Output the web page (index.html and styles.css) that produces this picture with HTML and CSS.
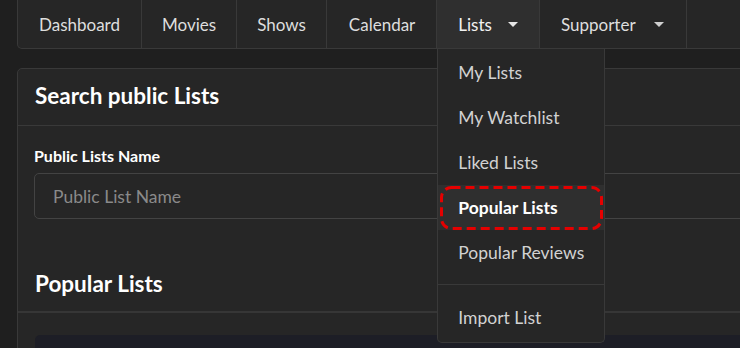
FILE: index.html
```html
<!DOCTYPE html>
<html lang="en">
  <head>
    <meta charset="UTF-8" />
    <meta name="viewport" content="width=device-width, initial-scale=1.0" />
    <title>Public Lists</title>
    <link rel="stylesheet" href="styles.css">
  </head>
  <body>
    <div class="page">
      <!-- Top navigation -->
      <nav class="navbar">
        <a class="nav-item">Dashboard</a>
        <a class="nav-item tight">Movies</a>
        <a class="nav-item tight">Shows</a>
        <a class="nav-item wide-left">Calendar</a>
        <div class="nav-item active has-menu">
          <span>Lists</span><span class="caret"></span>
          <div class="dropdown">
            <a class="dropdown-item">My Lists</a>
            <a class="dropdown-item">My Watchlist</a>
            <a class="dropdown-item">Liked Lists</a>
            <a class="dropdown-item selected">
              Popular Lists
              <svg class="highlight" width="166" height="47" viewBox="0 0 166 47">
                <rect x="1.5" y="1.5" width="160" height="41" rx="10" ry="10"
                  fill="none" stroke="#e50000" stroke-width="3" stroke-dasharray="9 5" />
              </svg>
            </a>
            <a class="dropdown-item">Popular Reviews</a>
            <div class="dropdown-divider"></div>
            <a class="dropdown-item">Import List</a>
          </div>
        </div>
        <div class="nav-item has-menu wide-right"><span>Supporter</span><span class="caret"></span></div>
        <div class="nav-fill"></div>
      </nav>

      <!-- Search panel -->
      <div class="panel">
        <div class="panel-header">Search public Lists</div>
        <div class="panel-body">
          <label class="field-label" for="listName">Public Lists Name</label>
          <input id="listName" class="field-input" type="text" placeholder="Public List Name" />
        </div>
        <div class="panel-header section">Popular Lists</div>
        <div class="panel-body lists">
          <div class="list-card"></div>
        </div>
      </div>
    </div>
  </body>
</html>
```

FILE: styles.css
```css
body {
  margin: 0;
  background: #1f1f1f;
  font-family: Lato, "Open Sans", sans-serif;
  color: #dcdcdc;
  overflow: hidden;
}
.page {
  width: 780px;
  padding-left: 17px;
}
.navbar {
  display: flex;
  height: 48px;
  background: #262626;
  border: 1px solid #393939;
  border-top: none;
  border-radius: 0 0 0 5px;
}
.nav-item {
  display: flex;
  align-items: center;
  padding: 0 21px;
  font-size: 17px;
  color: #dedede;
  border-right: 1px solid #393939;
  white-space: nowrap;
}
.nav-item.tight {
  padding: 0 20px;
}
.nav-item.wide-left {
  padding: 0 21px 0 22px;
}
.nav-item.wide-right {
  padding: 0 22px 0 21px;
}
.nav-item.active {
  background: #2f2f2f;
  color: #f2f2f2;
}
.has-menu {
  position: relative;
}
.caret {
  display: inline-block;
  margin-left: 16px;
  width: 0;
  height: 0;
  border-left: 5px solid transparent;
  border-right: 5px solid transparent;
  border-top: 5px solid #e6e6e6;
}
.has-menu:not(.active) .caret {
  border-top-color: #cfcfcf;
  margin-left: 18px;
}
.nav-fill {
  flex: 1;
}
.dropdown {
  position: absolute;
  top: 49px;
  left: 0;
  width: 166px;
  padding: 1px 0 2px;
  background: #262626;
  border: 1px solid #393939;
  border-top: none;
  border-radius: 0 0 5px 5px;
  z-index: 10;
}
.dropdown-item {
  position: relative;
  display: flex;
  align-items: center;
  height: 45px;
  padding-left: 20px;
  font-size: 17.5px;
  color: #d2d2d2;
}
.dropdown-item.selected {
  background: #2f2f2f;
  color: #ffffff;
  font-weight: bold;
}
.highlight {
  position: absolute;
  left: 2px;
  top: 1px;
}
.dropdown-divider {
  height: 1px;
  margin: 9px 0 10px;
  background: #393939;
}
.panel {
  margin-top: 19px;
  background: #262626;
  border: 1px solid #393939;
  border-radius: 5px 0 0 0;
}
.panel-header {
  height: 53px;
  display: flex;
  align-items: center;
  padding: 0 0 3px 17px;
  font-size: 22.5px;
  font-weight: bold;
  color: #ffffff;
  border-bottom: 1px solid #393939;
}
.panel-header.section {
  padding: 2px 0 1px 17px;
  border-bottom: 2px solid #363636;
}
.panel-body {
  padding: 20px 0 36px 16px;
}
.field-label {
  display: block;
  font-size: 16px;
  font-weight: bold;
  color: #ffffff;
  margin-bottom: 8px;
}
.field-input {
  box-sizing: border-box;
  display: block;
  width: 100%;
  height: 46px;
  padding: 0 18px;
  background: #262626;
  border: 1px solid #434343;
  border-radius: 5px;
  font-family: Lato, sans-serif;
  font-size: 17.5px;
  color: #dcdcdc;
}
.field-input::placeholder {
  color: #8a8a8a;
}
.panel-body.lists {
  padding: 22px 0 0 17px;
}
.list-card {
  height: 40px;
  background: #1d1e26;
  border-radius: 5px 0 0 0;
}
```
